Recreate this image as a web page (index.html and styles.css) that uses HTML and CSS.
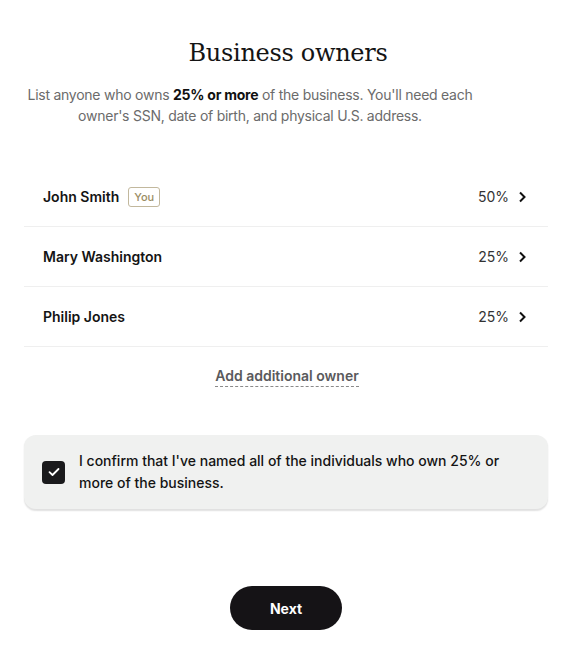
FILE: index.html
```html
<!DOCTYPE html>
<html lang="en">
<head>
    <meta charset="UTF-8">
    <meta name="viewport" content="width=device-width, initial-scale=1.0">
    <title>Business owners</title>
    <link rel="stylesheet" href="styles.css">
</head>
<body>
    <div class="page">
        <h1 class="title">Business owners</h1>
        <p class="intro">List anyone who owns <strong>25% or more</strong> of the business. You'll need each owner's SSN, date of birth, and physical U.S. address.</p>

        <!-- Owners list -->
        <div class="owners">
            <a href="#" class="owner">
                <span class="name">John Smith <span class="badge">You</span></span>
                <span class="share">50%
                    <svg width="10" height="12" viewBox="0 0 10 12"><path d="M3 1.5 L7.5 6 L3 10.5" fill="none" stroke="#111" stroke-width="2"/></svg>
                </span>
            </a>
            <a href="#" class="owner">
                <span class="name">Mary Washington</span>
                <span class="share">25%
                    <svg width="10" height="12" viewBox="0 0 10 12"><path d="M3 1.5 L7.5 6 L3 10.5" fill="none" stroke="#111" stroke-width="2"/></svg>
                </span>
            </a>
            <a href="#" class="owner">
                <span class="name">Philip Jones</span>
                <span class="share">25%
                    <svg width="10" height="12" viewBox="0 0 10 12"><path d="M3 1.5 L7.5 6 L3 10.5" fill="none" stroke="#111" stroke-width="2"/></svg>
                </span>
            </a>
        </div>

        <div class="add-row">
            <a href="#" class="add-link">Add additional owner</a>
        </div>

        <!-- Confirmation -->
        <label class="confirm">
            <span class="checkbox">
                <svg width="12" height="10" viewBox="0 0 12 10"><path d="M1.5 5.2 L4.5 8 L10.5 2" fill="none" stroke="#fff" stroke-width="1.8" stroke-linecap="round" stroke-linejoin="round"/></svg>
            </span>
            <span class="confirm-text">I confirm that I've named all of the individuals who own 25% or more of the business.</span>
        </label>

        <div class="actions">
            <button class="next">Next</button>
        </div>
    </div>
</body>
</html>
```

FILE: styles.css
```css
body {
    margin: 0;
    padding: 0;
    background: #fff;
    font-family: Inter, "Noto Sans", sans-serif;
    color: #141414;
}
.page {
    padding: 35px 28px 0 24px;
}
.title {
    margin: 0;
    text-align: center;
    font-family: "DejaVu Serif", serif;
    font-weight: normal;
    font-size: 24px;
    line-height: 36px;
    letter-spacing: -0.3px;
    padding-left: 4px;
}
.intro {
    margin: 13px 0 0 0;
    width: 452px;
    text-align: center;
    font-size: 14px;
    line-height: 21px;
    letter-spacing: -0.25px;
    color: #6b6b6b;
}
.intro strong {
    color: #111;
    font-weight: 700;
}
.owners {
    margin-top: 41px;
}
.owner {
    display: flex;
    justify-content: space-between;
    align-items: center;
    height: 59px;
    padding: 0 21px 0 19px;
    border-bottom: 1px solid #efefef;
    text-decoration: none;
    color: #141414;
    font-size: 14px;
}
.name {
    font-weight: 600;
    display: flex;
    align-items: center;
}
.badge {
    margin-left: 9px;
    border: 1px solid #c2b89d;
    border-radius: 3px;
    color: #9a8c64;
    font-size: 11px;
    font-weight: 500;
    padding: 1px 5px;
    line-height: 16px;
}
.share {
    display: flex;
    align-items: center;
    gap: 8px;
    color: #333;
}
.add-row {
    text-align: center;
    padding-top: 18px;
    padding-left: 2px;
}
.add-link {
    color: #5a5a5c;
    text-decoration: none;
    font-size: 14px;
    font-weight: 600;
    border-bottom: 1px dashed #8a8a8a;
    padding-bottom: 2px;
}
.confirm {
    display: flex;
    align-items: center;
    gap: 14px;
    margin-top: 50px;
    background: #f0f1f0;
    border-radius: 12px;
    padding: 15px 40px 15px 18px;
    box-shadow: 0 1.5px 1.5px rgba(0, 0, 0, 0.12);
    cursor: pointer;
}
.checkbox {
    flex: none;
    width: 23px;
    height: 23px;
    border-radius: 4px;
    background: #1a1a1c;
    display: flex;
    align-items: center;
    justify-content: center;
}
.confirm-text {
    font-size: 14px;
    font-weight: 500;
    line-height: 22px;
    color: #141414;
}
.actions {
    text-align: center;
    margin-top: 77px;
}
.next {
    width: 112px;
    height: 44px;
    border: none;
    border-radius: 22px;
    background: #151316;
    color: #fff;
    font-family: Inter, "Noto Sans", sans-serif;
    font-size: 14px;
    font-weight: 700;
    cursor: pointer;
}
```
